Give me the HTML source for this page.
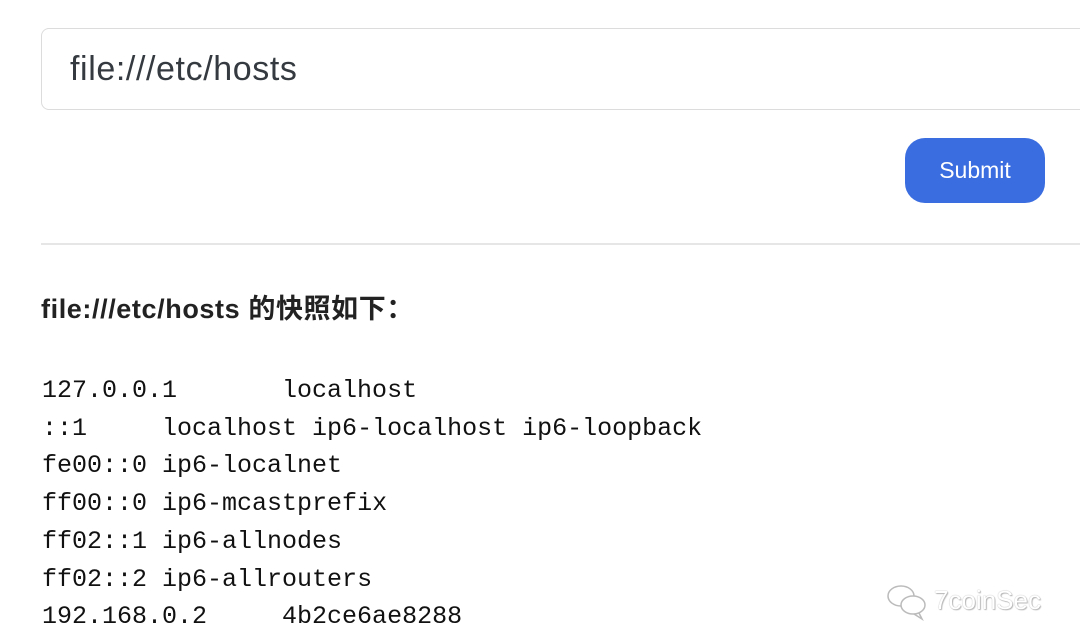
<!DOCTYPE html>
<html><head><meta charset="utf-8"><style>
body{margin:0;width:1080px;height:644px;background:#fff;position:relative;overflow:hidden;font-family:"Liberation Sans","Noto Sans CJK SC",sans-serif;color:#212529}
.inp{position:absolute;left:41px;top:28px;width:1100px;height:82px;border:1px solid #dcdcdc;border-radius:8px;box-sizing:border-box}
.inp span{position:absolute;left:28px;top:21px;font-size:34px;letter-spacing:0.6px;color:#343a40}
.btn{position:absolute;left:905px;top:138px;width:140px;height:65px;background:#3a6de0;border-radius:20px;color:#fff;font-size:23px;text-align:center;line-height:65px}
.hr{position:absolute;left:41px;top:243px;width:1100px;height:2px;background:#e6e6e6}
h3{position:absolute;left:41px;top:287px;margin:0;font-size:27px;letter-spacing:0.6px;font-weight:bold;color:#222}
pre{position:absolute;left:42px;top:372px;margin:0;font-family:"Liberation Mono",monospace;font-size:25px;line-height:37.7px;color:#111}
.wm{position:absolute;left:934px;top:585px;font-size:26px;color:#fff;text-shadow:0 0 1px #999,1px 1px 1px #bbb}
</style></head><body>
<div class="inp"><span>file:///etc/hosts</span></div>
<div class="btn">Submit</div>
<div class="hr"></div>
<h3>file:///etc/hosts 的快照如下：</h3>
<pre>127.0.0.1	localhost
::1	localhost ip6-localhost ip6-loopback
fe00::0	ip6-localnet
ff00::0	ip6-mcastprefix
ff02::1	ip6-allnodes
ff02::2	ip6-allrouters
192.168.0.2	4b2ce6ae8288</pre>
<svg style="position:absolute;left:886px;top:583px" width="46" height="38" viewBox="0 0 46 38" fill="none" stroke="#bbb" stroke-width="1.5"><ellipse cx="15" cy="13" rx="13" ry="10"/><ellipse cx="27" cy="22" rx="12" ry="9" fill="#fff"/><path d="M33 30 l3 6 -8 -5"/></svg>
<div class="wm">7coinSec</div>
</body></html>
